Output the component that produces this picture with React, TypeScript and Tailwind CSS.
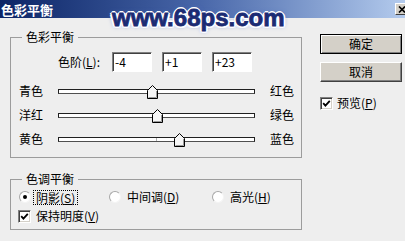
import React from 'react'

const SLIDERS = [
  { left: '青色', right: '红色', value: -4 },
  { left: '洋红', right: '绿色', value: 1 },
  { left: '黄色', right: '蓝色', value: 23 },
]

const TRACK_W = 197

function Key({ k }: { k: string }) {
  return (
    <>
      (<span className="underline underline-offset-1">{k}</span>)
    </>
  )
}

function Check() {
  return (
    <span className="w-[13px] h-[13px] shrink-0 bg-white border border-[#808080] border-r-white border-b-white shadow-[inset_1px_1px_0_#404040,inset_-1px_-1px_0_#d4d0c8] flex items-center justify-center">
      <svg width="9" height="9" viewBox="0 0 9 9">
        <path d="M1.2 4.2 L3.4 6.6 L7.8 1.8" stroke="#000" strokeWidth="1.8" fill="none" />
      </svg>
    </span>
  )
}

function Radio({ checked }: { checked?: boolean }) {
  return (
    <span className="w-[12px] h-[12px] shrink-0 rounded-full bg-white border border-[#a8a8a8] border-r-[#f4f4f4] border-b-[#f4f4f4] flex items-center justify-center">
      {checked && <span className="w-[4px] h-[4px] rounded-full bg-black" />}
    </span>
  )
}

function Slider({ left, right, value }: { left: string; right: string; value: number }) {
  const x = ((value + 100) / 200) * TRACK_W
  return (
    <div className="h-[24px] flex items-center pl-[8px]">
      <span className="w-[39px]">{left}</span>
      <div className="relative w-[197px] h-[5px] bg-white border border-[#202020] border-b-[#505050]">
        <span className="absolute left-[97px] top-0 w-px h-[3px] bg-[#b0b0b0]" />
        <svg
          width="11"
          height="14"
          viewBox="0 0 11 14"
          className="absolute top-[-5px]"
          style={{ left: x - 6.5 }}
        >
          <path d="M5.5 0.5 L10.5 5.5 V13.5 H0.5 V5.5 Z" fill="#f6f6f6" stroke="#000" />
          <path d="M9.5 6 V12.5 H1.5" stroke="#9a9a9a" fill="none" />
        </svg>
      </div>
      <span className="ml-[15px]">{right}</span>
    </div>
  )
}

function Input({ value }: { value: string }) {
  return (
    <div className="w-[40px] h-[20px] bg-white border border-[#808080] border-r-white border-b-white shadow-[inset_1px_1px_0_#404040] flex items-center pl-[2px]">
      {value}
    </div>
  )
}

export default function App() {
  return (
    <div className="relative w-[405px] h-[241px] overflow-hidden bg-[#eeeeee] text-black text-[12px] leading-[14px] font-['Noto_Sans_CJK_SC','Liberation_Sans',sans-serif]">
      {/* Title bar */}
      <div className="h-[18px] flex items-center justify-between bg-linear-to-r from-[#0c2466] via-[#4a68aa] to-[#b4cbed]">
        <span className="pl-[1px] text-white font-bold text-[13px] leading-[13px]">色彩平衡</span>
        <span className="w-[14px] h-[12px] mr-[-4px] bg-[#d4d0c8] border border-white border-r-[#404040] border-b-[#404040] flex items-center justify-center">
          <svg width="8" height="7" viewBox="0 0 8 7">
            <path d="M1 0.5 L7 6.5 M7 0.5 L1 6.5" stroke="#000" strokeWidth="1.6" />
          </svg>
        </span>
      </div>

      {/* Watermark */}
      <div className="absolute left-[112px] top-[6px] text-[24px] leading-[24px] font-bold font-['Liberation_Sans',sans-serif] text-[#1b2b74] [-webkit-text-stroke:0.8px_#1b2b74] [text-shadow:1px_1px_0_#fff,-1px_-1px_0_#fff,1px_-1px_0_#fff,-1px_1px_0_#fff,0_2px_0_#fff,2px_0_0_#fff,0_-2px_0_#fff,-2px_0_0_#fff,2px_2px_0_#e8eeff,-2px_2px_0_#e8eeff,0_0_5px_#5070c0]">
        www.68ps.com
      </div>

      <div className="flex pl-[10px]">
        {/* Left column */}
        <div className="w-[292px] mt-[13px]">
          <fieldset className="border border-[#9c9c9c] pb-[6px]">
            <legend className="ml-[11px] px-[4px] leading-[12px]">色彩平衡</legend>
            <div className="mt-[9px] h-[20px] flex items-center pl-[47px]">
              <span className="w-[54px]">
                色阶<Key k="L" />:
              </span>
              <div className="flex gap-[10px]">
                <Input value="-4" />
                <Input value="+1" />
                <Input value="+23" />
              </div>
            </div>
            <div className="mt-[7px]">
              {SLIDERS.map((s) => (
                <Slider key={s.left} {...s} />
              ))}
            </div>
          </fieldset>

          <fieldset className="mt-[15px] border border-[#9c9c9c] pb-[4px]">
            <legend className="ml-[11px] px-[4px] leading-[12px]">色调平衡</legend>
            <div className="mt-[3px] h-[18px] flex items-center pl-[8px]">
              <div className="w-[90px] flex items-center">
                <Radio checked />
                <span className="ml-[2px] px-[2px] border border-dotted border-black leading-[13px]">
                  阴影<Key k="S" />
                </span>
              </div>
              <div className="w-[103px] flex items-center">
                <Radio />
                <span className="ml-[6px]">
                  中间调<Key k="D" />
                </span>
              </div>
              <div className="flex items-center">
                <Radio />
                <span className="ml-[6px]">
                  高光<Key k="H" />
                </span>
              </div>
            </div>
            <div className="mt-[1px] h-[18px] flex items-center pl-[7px]">
              <Check />
              <span className="ml-[5px]">
                保持明度<Key k="V" />
              </span>
            </div>
          </fieldset>
        </div>

        {/* Right column */}
        <div className="ml-[18px] w-[82px] mt-[16px] flex flex-col">
          <button className="h-[20px] bg-[#d4d0c8] border border-black shadow-[inset_1px_1px_0_#fff,inset_-1px_-1px_0_#808080] flex items-center justify-center">
            确定
          </button>
          <button className="mt-[8px] h-[20px] bg-[#d4d0c8] border border-white border-r-[#404040] border-b-[#404040] shadow-[inset_-1px_-1px_0_#808080] flex items-center justify-center">
            取消
          </button>
          <div className="mt-[12px] h-[18px] flex items-center">
            <Check />
            <span className="ml-[4px]">
              预览<Key k="P" />
            </span>
          </div>
        </div>
      </div>
    </div>
  )
}
